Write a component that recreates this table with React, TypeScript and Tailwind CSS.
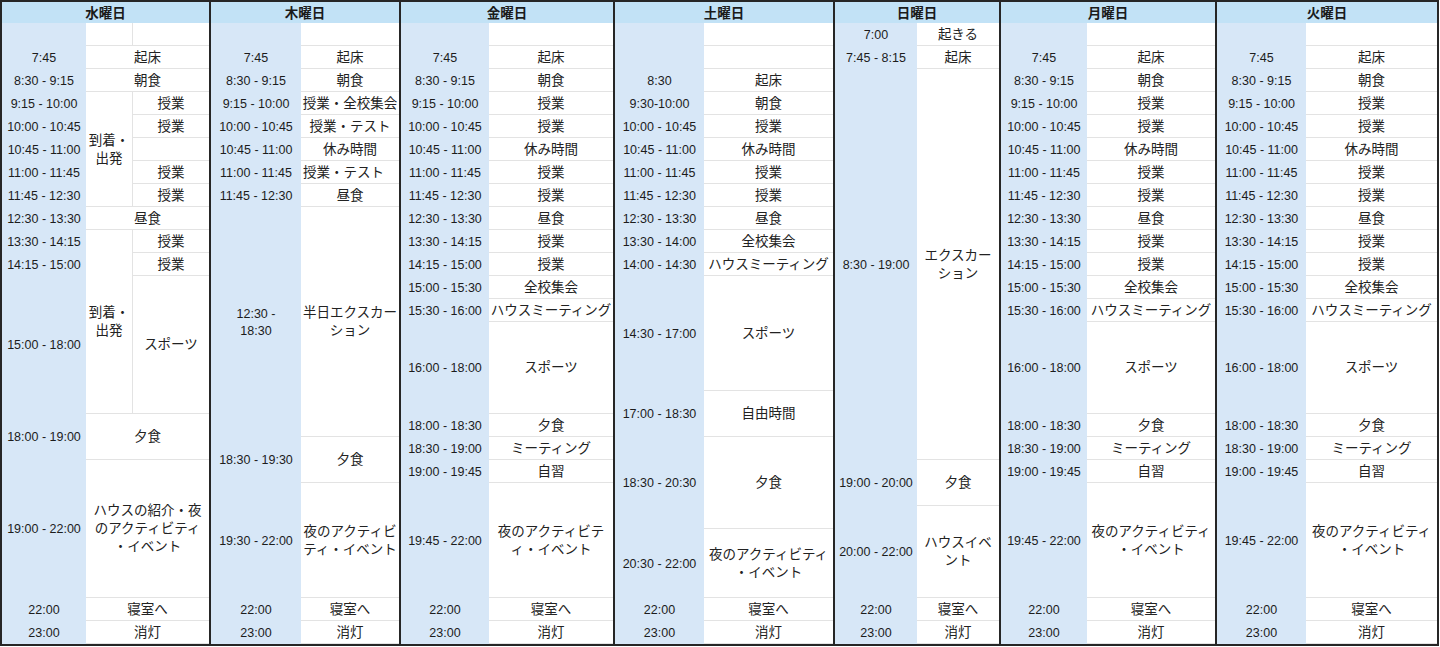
import React from 'react';

// [rowStart, rowSpan, colStart, colSpan, text, extra classes]
type Cell = [number, number, number, number, string, string?];

type Day = {
    name: string;
    cols: string;
    times: Cell[];
    acts: Cell[];
};

const RS: Record<number, string> = {
    1: 'row-start-1', 2: 'row-start-2', 3: 'row-start-3', 4: 'row-start-4', 5: 'row-start-5',
    6: 'row-start-6', 7: 'row-start-7', 8: 'row-start-8', 9: 'row-start-9', 10: 'row-start-10',
    11: 'row-start-11', 12: 'row-start-12', 13: 'row-start-13', 14: 'row-start-14', 15: 'row-start-15',
    16: 'row-start-16', 17: 'row-start-17', 18: 'row-start-18', 19: 'row-start-19', 20: 'row-start-20',
    21: 'row-start-21', 22: 'row-start-22', 23: 'row-start-23', 24: 'row-start-24', 25: 'row-start-25',
    26: 'row-start-26', 27: 'row-start-27',
};

const SP: Record<number, string> = {
    1: 'row-span-1', 2: 'row-span-2', 3: 'row-span-3', 4: 'row-span-4', 5: 'row-span-5',
    6: 'row-span-6', 8: 'row-span-8', 10: 'row-span-10', 17: 'row-span-17',
};

const COL: Record<number, string> = { 1: 'col-start-1', 2: 'col-start-2', 3: 'col-start-3' };
const CSPAN: Record<number, string> = { 1: 'col-span-1', 2: 'col-span-2' };

// Friday / Monday / Tuesday share the same plan
const weekdayTimes: Cell[] = [
    [2, 1, 1, 1, '7:45'],
    [3, 1, 1, 1, '8:30 - 9:15'],
    [4, 1, 1, 1, '9:15 - 10:00'],
    [5, 1, 1, 1, '10:00 - 10:45'],
    [6, 1, 1, 1, '10:45 - 11:00'],
    [7, 1, 1, 1, '11:00 - 11:45'],
    [8, 1, 1, 1, '11:45 - 12:30'],
    [9, 1, 1, 1, '12:30 - 13:30'],
    [10, 1, 1, 1, '13:30 - 14:15'],
    [11, 1, 1, 1, '14:15 - 15:00'],
    [12, 1, 1, 1, '15:00 - 15:30'],
    [13, 1, 1, 1, '15:30 - 16:00'],
    [14, 4, 1, 1, '16:00 - 18:00'],
    [18, 1, 1, 1, '18:00 - 18:30'],
    [19, 1, 1, 1, '18:30 - 19:00'],
    [20, 1, 1, 1, '19:00 - 19:45'],
    [21, 5, 1, 1, '19:45 - 22:00'],
    [26, 1, 1, 1, '22:00'],
    [27, 1, 1, 1, '23:00'],
];

const weekdayActs = (night: string): Cell[] => [
    [1, 1, 2, 1, ''],
    [2, 1, 2, 1, '起床'],
    [3, 1, 2, 1, '朝食'],
    [4, 1, 2, 1, '授業'],
    [5, 1, 2, 1, '授業'],
    [6, 1, 2, 1, '休み時間'],
    [7, 1, 2, 1, '授業'],
    [8, 1, 2, 1, '授業'],
    [9, 1, 2, 1, '昼食'],
    [10, 1, 2, 1, '授業'],
    [11, 1, 2, 1, '授業'],
    [12, 1, 2, 1, '全校集会'],
    [13, 1, 2, 1, 'ハウスミーティング'],
    [14, 4, 2, 1, 'スポーツ'],
    [18, 1, 2, 1, '夕食'],
    [19, 1, 2, 1, 'ミーティング'],
    [20, 1, 2, 1, '自習'],
    [21, 5, 2, 1, night],
    [26, 1, 2, 1, '寝室へ'],
    [27, 1, 2, 1, '消灯'],
];

const days: Day[] = [
    {
        name: '水曜日',
        cols: 'grid-cols-[84px_46px_77px]',
        times: [
            [2, 1, 1, 1, '7:45'],
            [3, 1, 1, 1, '8:30 - 9:15'],
            [4, 1, 1, 1, '9:15 - 10:00'],
            [5, 1, 1, 1, '10:00 - 10:45'],
            [6, 1, 1, 1, '10:45 - 11:00'],
            [7, 1, 1, 1, '11:00 - 11:45'],
            [8, 1, 1, 1, '11:45 - 12:30'],
            [9, 1, 1, 1, '12:30 - 13:30'],
            [10, 1, 1, 1, '13:30 - 14:15'],
            [11, 1, 1, 1, '14:15 - 15:00'],
            [12, 6, 1, 1, '15:00 - 18:00'],
            [18, 2, 1, 1, '18:00 - 19:00'],
            [20, 6, 1, 1, '19:00 - 22:00'],
            [26, 1, 1, 1, '22:00'],
            [27, 1, 1, 1, '23:00'],
        ],
        acts: [
            [1, 1, 2, 1, ''],
            [1, 1, 3, 1, '', 'border-l'],
            [2, 1, 2, 2, '起床'],
            [3, 1, 2, 2, '朝食'],
            [4, 5, 2, 1, '到着・\n出発'],
            [4, 1, 3, 1, '授業', 'border-l'],
            [5, 1, 3, 1, '授業', 'border-l'],
            [6, 1, 3, 1, '', 'border-l'],
            [7, 1, 3, 1, '授業', 'border-l'],
            [8, 1, 3, 1, '授業', 'border-l'],
            [9, 1, 2, 2, '昼食'],
            [10, 8, 2, 1, '到着・\n出発'],
            [10, 1, 3, 1, '授業', 'border-l'],
            [11, 1, 3, 1, '授業', 'border-l'],
            [12, 6, 3, 1, 'スポーツ', 'border-l'],
            [18, 2, 2, 2, '夕食'],
            [20, 6, 2, 2, 'ハウスの紹介・夜\nのアクティビティ\n・イベント'],
            [26, 1, 2, 2, '寝室へ'],
            [27, 1, 2, 2, '消灯'],
        ],
    },
    {
        name: '木曜日',
        cols: 'grid-cols-[90px_98px]',
        times: [
            [2, 1, 1, 1, '7:45'],
            [3, 1, 1, 1, '8:30 - 9:15'],
            [4, 1, 1, 1, '9:15 - 10:00'],
            [5, 1, 1, 1, '10:00 - 10:45'],
            [6, 1, 1, 1, '10:45 - 11:00'],
            [7, 1, 1, 1, '11:00 - 11:45'],
            [8, 1, 1, 1, '11:45 - 12:30'],
            [9, 10, 1, 1, '12:30 -\n18:30'],
            [19, 2, 1, 1, '18:30 - 19:30'],
            [21, 5, 1, 1, '19:30 - 22:00'],
            [26, 1, 1, 1, '22:00'],
            [27, 1, 1, 1, '23:00'],
        ],
        acts: [
            [1, 1, 2, 1, ''],
            [2, 1, 2, 1, '起床'],
            [3, 1, 2, 1, '朝食'],
            [4, 1, 2, 1, '授業・全校集会'],
            [5, 1, 2, 1, '授業・テスト'],
            [6, 1, 2, 1, '休み時間'],
            [7, 1, 2, 1, '授業・テスト', 'justify-start pl-[2px]'],
            [8, 1, 2, 1, '昼食'],
            [9, 10, 2, 1, '半日エクスカー\nション'],
            [19, 2, 2, 1, '夕食'],
            [21, 5, 2, 1, '夜のアクティビ\nティ・イベント'],
            [26, 1, 2, 1, '寝室へ'],
            [27, 1, 2, 1, '消灯'],
        ],
    },
    {
        name: '金曜日',
        cols: 'grid-cols-[88px_124px]',
        times: weekdayTimes,
        acts: weekdayActs('夜のアクティビテ\nィ・イベント'),
    },
    {
        name: '土曜日',
        cols: 'grid-cols-[89px_129px]',
        times: [
            [3, 1, 1, 1, '8:30'],
            [4, 1, 1, 1, '9:30-10:00'],
            [5, 1, 1, 1, '10:00 - 10:45'],
            [6, 1, 1, 1, '10:45 - 11:00'],
            [7, 1, 1, 1, '11:00 - 11:45'],
            [8, 1, 1, 1, '11:45 - 12:30'],
            [9, 1, 1, 1, '12:30 - 13:30'],
            [10, 1, 1, 1, '13:30 - 14:00'],
            [11, 1, 1, 1, '14:00 - 14:30'],
            [12, 5, 1, 1, '14:30 - 17:00'],
            [17, 2, 1, 1, '17:00 - 18:30'],
            [19, 4, 1, 1, '18:30 - 20:30'],
            [23, 3, 1, 1, '20:30 - 22:00'],
            [26, 1, 1, 1, '22:00'],
            [27, 1, 1, 1, '23:00'],
        ],
        acts: [
            [1, 1, 2, 1, ''],
            [2, 1, 2, 1, ''],
            [3, 1, 2, 1, '起床'],
            [4, 1, 2, 1, '朝食'],
            [5, 1, 2, 1, '授業'],
            [6, 1, 2, 1, '休み時間'],
            [7, 1, 2, 1, '授業'],
            [8, 1, 2, 1, '授業'],
            [9, 1, 2, 1, '昼食'],
            [10, 1, 2, 1, '全校集会'],
            [11, 1, 2, 1, 'ハウスミーティング'],
            [12, 5, 2, 1, 'スポーツ'],
            [17, 2, 2, 1, '自由時間'],
            [19, 4, 2, 1, '夕食'],
            [23, 3, 2, 1, '夜のアクティビティ\n・イベント'],
            [26, 1, 2, 1, '寝室へ'],
            [27, 1, 2, 1, '消灯'],
        ],
    },
    {
        name: '日曜日',
        cols: 'grid-cols-[82px_82px]',
        times: [
            [1, 1, 1, 1, '7:00'],
            [2, 1, 1, 1, '7:45 - 8:15'],
            [3, 17, 1, 1, '8:30 - 19:00'],
            [20, 2, 1, 1, '19:00 - 20:00'],
            [22, 4, 1, 1, '20:00 - 22:00'],
            [26, 1, 1, 1, '22:00'],
            [27, 1, 1, 1, '23:00'],
        ],
        acts: [
            [1, 1, 2, 1, '起きる'],
            [2, 1, 2, 1, '起床'],
            [3, 17, 2, 1, 'エクスカー\nション'],
            [20, 2, 2, 1, '夕食'],
            [22, 4, 2, 1, 'ハウスイベ\nント'],
            [26, 1, 2, 1, '寝室へ'],
            [27, 1, 2, 1, '消灯'],
        ],
    },
    {
        name: '月曜日',
        cols: 'grid-cols-[86px_128px]',
        times: weekdayTimes,
        acts: weekdayActs('夜のアクティビティ\n・イベント'),
    },
    {
        name: '火曜日',
        cols: 'grid-cols-[89px_131px]',
        times: weekdayTimes,
        acts: weekdayActs('夜のアクティビティ\n・イベント'),
    },
];

const DayColumn: React.FC<{ day: Day }> = ({ day }) => {
    return (
        <div className="flex flex-col border-r-2 border-[#262626]">
            <div className="flex justify-center items-center bg-[#c2e2f6] pt-[4px] h-[21px] font-bold text-[13.5px] text-[#1b1b1b]">
                {day.name}
            </div>
            <div className={`grid grid-rows-[repeat(27,23px)] ${day.cols}`}>
                {/* blue strip behind the time column */}
                <div className="col-start-1 row-start-1 row-span-27 bg-[#d7e7f7]" />
                {day.times.map(([r, s, c, cs, text, extra], i) => (
                    <div
                        key={'t' + i}
                        className={`${RS[r]} ${SP[s]} ${COL[c]} ${CSPAN[cs]} flex items-center justify-center text-center whitespace-pre-line pt-px text-[12.5px] leading-[17px] text-[#1c1c1c] ${extra ?? ''}`}
                    >
                        {text}
                    </div>
                ))}
                {day.acts.map(([r, s, c, cs, text, extra], i) => (
                    <div
                        key={'a' + i}
                        className={`${RS[r]} ${SP[s]} ${COL[c]} ${CSPAN[cs]} flex items-center justify-center text-center whitespace-pre-line bg-white border-b border-[#e3e3e3] pt-px text-[13.5px] leading-[18px] text-[#222] ${extra ?? ''}`}
                    >
                        {text}
                    </div>
                ))}
            </div>
        </div>
    );
};

export default function App() {
    return (
        <div className="bg-white w-[1440px] h-[647px] font-['Liberation_Sans','Noto_Sans_CJK_JP',sans-serif]">
            <div className="flex border-[#262626] border-t-2 border-b-2 border-l-2 w-fit">
                {days.map((d) => (
                    <DayColumn key={d.name} day={d} />
                ))}
            </div>
        </div>
    );
}
